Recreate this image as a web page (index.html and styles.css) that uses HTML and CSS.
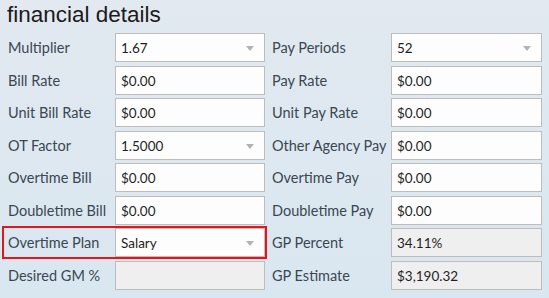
FILE: index.html
```html
<!DOCTYPE html>
<html lang="en">

<head>
    <meta charset="UTF-8">
    <title>Financial Details</title>
    <link rel="stylesheet" href="styles.css">
</head>

<body>
    <div class="panel">
        <h1 class="title">financial details</h1>
        <div class="grid">
            <div class="col left">
                <div class="row"><label>Multiplier</label><div class="field select">1.67<span class="caret"></span></div></div>
                <div class="row"><label>Bill Rate</label><div class="field">$0.00</div></div>
                <div class="row"><label>Unit Bill Rate</label><div class="field">$0.00</div></div>
                <div class="row"><label>OT Factor</label><div class="field select">1.5000<span class="caret"></span></div></div>
                <div class="row"><label>Overtime Bill</label><div class="field">$0.00</div></div>
                <div class="row"><label>Doubletime Bill</label><div class="field">$0.00</div></div>
                <div class="row highlight"><label>Overtime Plan</label><div class="field select">Salary<span class="caret"></span></div></div>
                <div class="row"><label>Desired GM %</label><div class="field disabled"></div></div>
            </div>
            <div class="col right">
                <div class="row"><label>Pay Periods</label><div class="field select">52<span class="caret"></span></div></div>
                <div class="row"><label>Pay Rate</label><div class="field">$0.00</div></div>
                <div class="row"><label>Unit Pay Rate</label><div class="field">$0.00</div></div>
                <div class="row"><label>Other Agency Pay</label><div class="field">$0.00</div></div>
                <div class="row"><label>Overtime Pay</label><div class="field">$0.00</div></div>
                <div class="row"><label>Doubletime Pay</label><div class="field">$0.00</div></div>
                <div class="row"><label>GP Percent</label><div class="field disabled">34.11%</div></div>
                <div class="row"><label>GP Estimate</label><div class="field disabled">$3,190.32</div></div>
            </div>
        </div>
    </div>
</body>

</html>
```

FILE: styles.css
```css
body {
    margin: 0;
    padding: 0;
    background: linear-gradient(to bottom, #e2e9f0, #d9e7f0);
    font-family: Lato, "Open Sans", sans-serif;
    height: 298px;
    overflow: hidden;
}

.panel {
    padding: 2px 0 0 0;
}

.title {
    font-family: "Liberation Sans", Arial, sans-serif;
    font-weight: normal;
    font-size: 22.5px;
    color: #1b1b1b;
    margin: 0 0 5px 7px;
    line-height: 26px;
}

.grid {
    display: flex;
}

.col {
    display: flex;
    flex-direction: column;
    gap: 3.5px;
}

.col.left {
    width: 257px;
    padding-left: 8px;
}

.col.right {
    padding-left: 7px;
}

.row {
    display: flex;
    align-items: center;
    height: 29px;
}

.row label {
    font-size: 14.5px;
    color: #3a4752;
}

.left label {
    width: 107px;
}

.right label {
    width: 119px;
    white-space: nowrap;
}

.field {
    position: relative;
    box-sizing: border-box;
    height: 29px;
    width: 150px;
    border: 1px solid #bdbdbd;
    background: #fdfdfd;
    padding: 6px 0 0 5px;
    font-size: 13.5px;
    color: #1f1f1f;
}

.right .field {
    width: 151px;
}

.field.disabled {
    background: #efefef;
}

.caret {
    position: absolute;
    right: 10px;
    top: 12px;
    width: 0;
    height: 0;
    border-left: 4px solid transparent;
    border-right: 4px solid transparent;
    border-top: 5px solid #b3b3b3;
}

.highlight {
    outline: 2px solid #e8141b;
    margin-left: -4px;
    padding-left: 4px;
}
```
